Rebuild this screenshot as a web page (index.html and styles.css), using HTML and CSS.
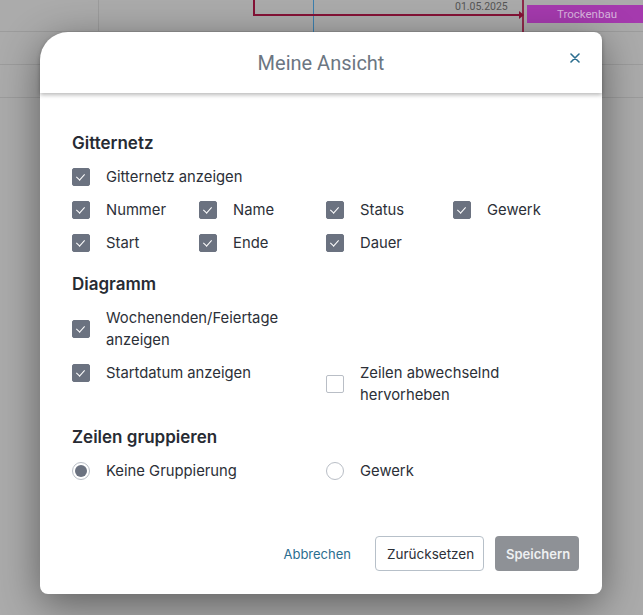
FILE: index.html
```html
<!DOCTYPE html>
<html lang="de">
<head>
<meta charset="utf-8">
<title>Meine Ansicht</title>
<link rel="stylesheet" href="styles.css">
</head>
<body>
<div class="canvas">
  <div class="hline h1"></div>
  <div class="hline h2"></div>
  <div class="hline h3"></div>
  <div class="vline v-grey"></div>
  <div class="vline v-blue"></div>
  <div class="dep-v1"></div>
  <div class="dep-h"></div>
  <div class="dep-v2"></div>
  <div class="dep-arrow"></div>
  <div class="date-label">01.05.2025</div>
  <div class="task-bar">Trockenbau</div>
</div>

<div class="modal">
  <div class="modal-header">
    <h1 class="modal-title">Meine Ansicht</h1>
    <button class="close-btn" aria-label="Schließen">
      <svg width="10" height="10" viewBox="0 0 10 10"><path d="M1 1L9 9M9 1L1 9" stroke="#2b6e8f" stroke-width="1.6" stroke-linecap="round"/></svg>
    </button>
  </div>
  <div class="modal-body">
    <h2 class="section-title first">Gitternetz</h2>
    <div class="row-single">
      <label class="check"><span class="box on"></span><span class="lbl">Gitternetz anzeigen</span></label>
    </div>
    <div class="grid4">
      <label class="check"><span class="box on"></span><span class="lbl">Nummer</span></label>
      <label class="check"><span class="box on"></span><span class="lbl">Name</span></label>
      <label class="check"><span class="box on"></span><span class="lbl">Status</span></label>
      <label class="check"><span class="box on"></span><span class="lbl">Gewerk</span></label>
      <label class="check"><span class="box on"></span><span class="lbl">Start</span></label>
      <label class="check"><span class="box on"></span><span class="lbl">Ende</span></label>
      <label class="check"><span class="box on"></span><span class="lbl">Dauer</span></label>
    </div>

    <h2 class="section-title">Diagramm</h2>
    <div class="grid2">
      <label class="check multi"><span class="box on"></span><span class="lbl">Wochenenden/Feiertage anzeigen</span></label>
      <div></div>
      <label class="check multi"><span class="box on"></span><span class="lbl">Startdatum anzeigen</span></label>
      <label class="check multi"><span class="box"></span><span class="lbl">Zeilen abwechselnd hervorheben</span></label>
    </div>

    <h2 class="section-title">Zeilen gruppieren</h2>
    <div class="grid2 radios">
      <label class="check"><span class="radio on"></span><span class="lbl">Keine Gruppierung</span></label>
      <label class="check"><span class="radio"></span><span class="lbl">Gewerk</span></label>
    </div>
  </div>
  <div class="modal-footer">
    <button class="btn-link">Abbrechen</button>
    <button class="btn-outline">Zurücksetzen</button>
    <button class="btn-primary">Speichern</button>
  </div>
</div>
</body>
</html>
```

FILE: styles.css
```css
html, body {
  margin: 0;
  padding: 0;
}
body {
  width: 643px;
  height: 615px;
  overflow: hidden;
  position: relative;
  background: #ababab;
  font-family: Inter, "Noto Sans", sans-serif;
}

.canvas {
  position: absolute;
  inset: 0;
}
.hline {
  position: absolute;
  left: 0;
  right: 0;
  height: 1px;
  background: #9c9c9c;
}
.h1 { top: 31px; }
.h2 { top: 64px; }
.h3 { top: 97px; }
.vline {
  position: absolute;
  top: 0;
  width: 1px;
  height: 97px;
}
.v-grey { left: 98px; background: #9c9c9c; }
.v-blue { left: 313px; background: #3c7fae; }

.dep-v1 {
  position: absolute;
  left: 253px;
  top: 0;
  width: 2px;
  height: 15px;
  background: #851236;
}
.dep-h {
  position: absolute;
  left: 253px;
  top: 14px;
  width: 268px;
  height: 2px;
  background: #851236;
}
.dep-arrow {
  position: absolute;
  left: 519px;
  top: 11px;
  width: 0;
  height: 0;
  border-top: 4px solid transparent;
  border-bottom: 4px solid transparent;
  border-left: 5px solid #851236;
}
.dep-v2 {
  position: absolute;
  left: 522px;
  top: 0;
  width: 2px;
  height: 97px;
  background: #8e2a4a;
}
.date-label {
  position: absolute;
  left: 455px;
  top: 1px;
  font-family: Roboto, sans-serif;
  font-size: 10.5px;
  line-height: 12px;
  color: #555;
}
.task-bar {
  position: absolute;
  left: 527px;
  top: 5px;
  width: 120px;
  height: 18px;
  background: #a53aae;
  color: #d9b4de;
  font-family: Roboto, sans-serif;
  font-size: 11.5px;
  line-height: 18px;
  padding-left: 30px;
  box-sizing: border-box;
}

.modal {
  position: absolute;
  left: 40px;
  top: 32px;
  width: 562px;
  height: 562px;
  background: #fff;
  border-radius: 28px 8px 8px 8px;
  box-shadow: 0 10px 40px rgba(0, 0, 0, 0.45);
  display: flex;
  flex-direction: column;
}
.modal-header {
  position: relative;
  height: 61px;
  flex: none;
  display: flex;
  align-items: center;
  justify-content: center;
  box-shadow: 0 2px 4px rgba(0, 0, 0, 0.28);
  border-radius: 28px 8px 0 0;
  z-index: 1;
}
.modal-title {
  margin: 0;
  font-family: Roboto, sans-serif;
  font-weight: 400;
  font-size: 20px;
  color: #6c7682;
  padding-top: 0;
}
.close-btn {
  position: absolute;
  right: 20px;
  top: 19px;
  width: 14px;
  height: 14px;
  padding: 0;
  border: 0;
  background: none;
  display: flex;
  align-items: center;
  justify-content: center;
}

.modal-body {
  flex: 1;
  padding: 38px 32px 0 32px;
}
.section-title {
  margin: 17px 0 10px 0;
  font-size: 17px;
  line-height: 24px;
  font-weight: 600;
  color: #272b33;
}
.section-title.first { margin-top: 0; }
.section-title + .grid2 { margin-top: 11px; }
.section-title + .grid2.radios { margin-top: 9px; }

.row-single { margin-bottom: 9px; }
.grid4 {
  display: grid;
  grid-template-columns: repeat(4, 127px);
  row-gap: 9px;
}
.grid2 {
  display: grid;
  grid-template-columns: 254px 244px;
  row-gap: 11px;
  align-items: start;
}
.grid2 + .section-title { margin-top: 19px; }

.check {
  display: flex;
  align-items: center;
  gap: 16px;
  font-size: 14.8px;
  line-height: 24px;
  color: #2c3038;
}
.check.multi .lbl {
  line-height: 22px;
  max-width: 210px;
}
.box {
  flex: none;
  width: 18px;
  height: 18px;
  box-sizing: border-box;
  border-radius: 2px;
  border: 1px solid #b9bec6;
  background: #fff;
  position: relative;
}
.box.on {
  background: #6b7280;
  border-color: #6b7280;
}
.box.on::after {
  content: "";
  position: absolute;
  left: 5px;
  top: 3px;
  width: 4px;
  height: 7px;
  border-right: 1.3px solid #fff;
  border-bottom: 1.3px solid #fff;
  transform: rotate(42deg);
}
.radio {
  flex: none;
  width: 18px;
  height: 18px;
  box-sizing: border-box;
  border-radius: 50%;
  border: 1px solid #b9bec6;
  background: #fff;
  position: relative;
}
.radio.on::after {
  content: "";
  position: absolute;
  left: 2px;
  top: 2px;
  width: 12px;
  height: 12px;
  border-radius: 50%;
  background: #6b7280;
}

.modal-footer {
  flex: none;
  display: flex;
  justify-content: flex-end;
  align-items: center;
  padding: 0 23px 23px 0;
  gap: 11px;
}
.modal-footer button {
  font-family: Inter, sans-serif;
  font-size: 13px;
  height: 35px;
  border-radius: 4px;
  cursor: pointer;
}
.btn-link {
  border: 0;
  background: none;
  color: #2b6e8f;
  padding: 0 12px;
  margin-right: 1px;
}
.btn-outline {
  background: #fff;
  border: 1px solid #b7c0c9;
  color: #2c3038;
  padding: 0 11px;
  width: 109px;
  font-size: 13.5px !important;
}
.btn-primary {
  background: #8e9196;
  border: 0;
  color: #eef0f2;
  font-weight: 600;
  padding: 0 11px;
  width: 84px;
}
```
